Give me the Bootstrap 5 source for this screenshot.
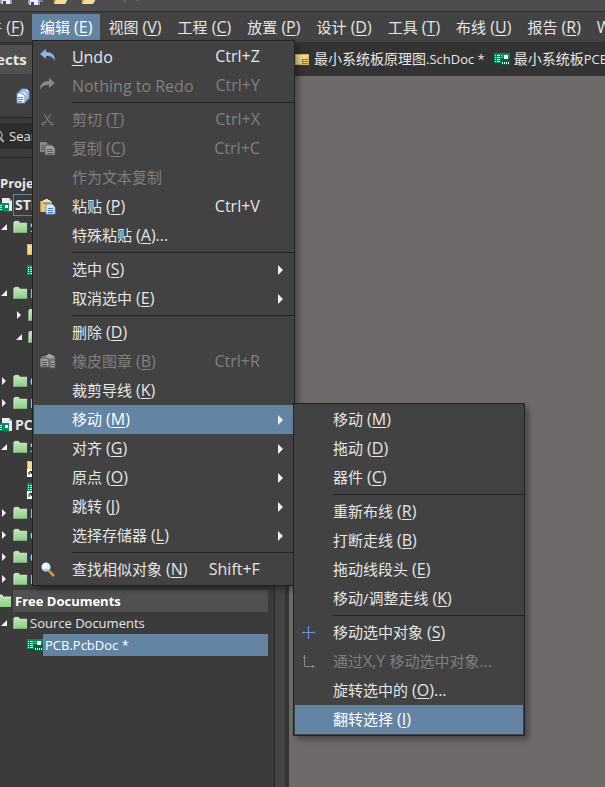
<!DOCTYPE html>
<html lang="zh-CN">
<head>
<meta charset="utf-8">
<meta name="viewport" content="width=device-width, initial-scale=1">
<title>PCB.PcbDoc</title>
<link href="https://cdn.jsdelivr.net/npm/bootstrap@5.3.0/dist/css/bootstrap.min.css" rel="stylesheet">
<style>
body{font-family:"Open Sans","Noto Sans CJK SC",sans-serif;font-size:14px;line-height:22px;color:#e6e6e6;background:#6e6a69}
svg{display:block;flex:none}
u{text-underline-offset:2px;text-decoration-thickness:1px}
i{font-style:normal;font-size:16px;line-height:1}
.quickbar{height:12px;background:#4d4d4d;border-bottom:1px solid #2d2d2d;padding-bottom:7px}
.menubar{background:#434343;height:30px;padding-top:2px;margin:0;font-size:15px;line-height:26px}
.menubar>.nav-item:first-child{margin-left:-36px}
.menubar>.nav-item:last-child{min-width:0;flex:0 1 auto;overflow:hidden}
.top-btn{border:0;background:none;color:#e6e6e6;padding:0 8px;height:26px;display:block;white-space:nowrap}
.top-btn.show{background:#6484a4;color:#fff}
.pop{--bs-dropdown-min-width:0;display:block;position:absolute;margin:0;padding:1px;border:1px solid #222;border-radius:0;background:#424242;box-shadow:4px 4px 5px rgba(0,0,0,.3);font-size:15px;color:#e6e6e6}
.pop-main{left:0;top:100%;width:263px}
.pop-sub{left:100%;top:-2px;width:232px}
.cmd{display:flex;align-items:center;gap:16px;width:100%;height:29px;border:0;background:none;color:#e6e6e6;padding:0 10px 0 6px;text-align:left;line-height:29px;white-space:nowrap}
.cmd:disabled{color:#808080}
.cmd.on{background:#6484a4;color:#fff}
.cmd kbd{font:inherit;font-size:16px;background:none;color:inherit;padding:0 23px 0 0;margin-left:auto}
.ico{width:16px;flex:none}
.tri{margin-left:auto}
.rule{height:1px;margin:2px -1px 2px 38px;background:#222}
.side{width:275px;background:#3b3b3b;border-right:1px solid #262626;font-size:13px}
.gutter{width:14px;background:#444;border-right:4px solid #333}
.side-head{height:32px;line-height:29px;border-top:3px solid #333;background:#505050;font-weight:700;font-size:15px;text-indent:-34px}
.side-tools{height:44px;background:#404040;border-bottom:1px solid #262626;padding-left:16px}
.finder{margin:5px 0 8px;height:26px;background:#2d2d2d;border-radius:0;padding:0 0 0 9px;position:relative}
.finder input{border:0;background:none;color:#e6e6e6;padding:0;width:100%}
.finder input::placeholder{color:#e6e6e6}
.finder svg{position:absolute;left:-8px;top:7px}
.tree-head{height:37px;border-top:1px solid #262626;padding-top:14px;font-weight:700}
.tree{margin:0;padding:0 6px 0 0;list-style:none}
.tree li{display:flex;align-items:center;height:22px}
.tree .cap{flex:1;height:22px;line-height:22px;padding-left:2px;white-space:nowrap;min-width:0;overflow:hidden}
.lv0 svg{margin-left:-4px;margin-right:1px}
.lv0 .cap{font-weight:700}
.lv0 .proj{font-size:14px}
.lv1 .twist{margin-right:5px}
.lv2{padding-left:15px}
.lv2 .twist{margin-right:5px}
.doc{padding-left:27px}
.tree .focus-box{border:1px solid #6484a4;line-height:20px;padding-left:1px}
.free{background:#505050;color:#fff}
.picked{background:#6484a4;color:#fff}
.tabs{height:34px;background:#333;padding-left:6px;overflow:hidden}
.tab{border:0;background:none;color:#e6e6e6;padding:0;height:34px;white-space:nowrap;display:flex;flex:none;align-items:center;gap:5px;margin-right:9px}
.tab+.tab{gap:4px}
.tab i{font-size:13px}
</style>
<script src="https://cdn.jsdelivr.net/npm/bootstrap@5.3.0/dist/js/bootstrap.bundle.min.js"></script>
</head>
<body class="d-flex flex-column vh-100 overflow-hidden">
<svg width="0" height="0" class="position-absolute">
<defs>
<linearGradient id="gg" x1="0" y1="0" x2="0" y2="1"><stop offset="0" stop-color="#c3e6bb"/><stop offset="1" stop-color="#8fcd88"/></linearGradient>
<linearGradient id="yy" x1="0" y1="0" x2="1" y2="1"><stop offset="0" stop-color="#fbe9a9"/><stop offset="1" stop-color="#e6c565"/></linearGradient>
</defs>
<symbol id="folder" viewBox="0 0 16 14"><path d="M1 2l1-1h4l1 2h8v10H1z" fill="url(#gg)"/><path d="M1 13V2l1-1h4l1 2h8" fill="none" stroke="#d4efce"/></symbol>
<symbol id="pcb" viewBox="0 0 16 12"><path d="M0 0h16v10H0z" fill="#0b8a5c"/><path d="M7 5h9v7H7z" fill="#06613f"/><path d="M10 2h4v4h-4z" fill="#f4fff9"/><path d="M1 2.500h1M3 2.500h3M1 4.500h1M3 4.500h3M1 6.500h1M3 6.500h3M1 8.500h1M3 8.500h3" stroke="#dff5ea"/><path d="M8.500 9v2M10.500 9v2M12.500 9v2M14.500 9v2" stroke="#e8fff5"/><path d="M7 2.500h2M7 4.500h2" stroke="#37c48d"/></symbol>
<symbol id="sch" viewBox="0 0 14 11"><path d="M0 0h14v11H0z" fill="url(#yy)"/><path d="M.5.5h13v10H.5z" fill="none" stroke="#d3b364"/><path d="M7 5.500h6M8 7.500h5M7 9.500h6M7.500 5v5" stroke="#8d783f"/></symbol>
<symbol id="prj" viewBox="0 0 16 16"><path d="M6 1h7l3 3v10H6z" fill="#e8edf8"/><path d="M13 1v3h3" fill="#a9b6d6"/><path d="M0 6h13v8H0z" fill="#0b8a5c"/><path d="M9 8h3v3H9z" fill="#fff"/><path d="M1 8.500h5M1 10.500h5M1 12.500h5" stroke="#dff5ea"/><path d="M8.500 12v3M10.500 12v3M12.500 12v3" stroke="#0b8a5c"/></symbol>
<symbol id="open" viewBox="0 0 6 8"><path d="M6 1v6H0z" fill="#f2f2f2"/></symbol>
<symbol id="shut" viewBox="0 0 6 8"><path d="M1 0l4 4-4 4z" fill="#f2f2f2"/></symbol>
<symbol id="more" viewBox="0 0 5 10"><path d="M0 0l5 5-5 5z" fill="#f0f0f0"/></symbol>
<symbol id="undo" viewBox="0 0 16 16"><path d="M0 5l6-5v3c6 0 9 3 9 9-2-4-4-5-9-5v3z" fill="#8fb4e6"/></symbol>
<symbol id="clip" viewBox="0 0 16 16"><path d="M0 2h12v11H0z" fill="#e6c67c"/><path d="M0 2h1v11H0zM11 2h1v3h-1z" fill="#b98d3e"/><path d="M3 1h2V0h3v1h2v3H3z" fill="#f5df97"/><path d="M3 4h7" stroke="#77602f"/><path d="M6 5h6l3 3v7H6z" fill="#dce8fb" stroke="#7995c7"/><path d="M8 9.500h5M8 11.500h5M8 13.500h5" stroke="#4f74b4"/></symbol>
<symbol id="disk" viewBox="0 0 12 12"><path d="M0 0h12v11H1l-1-1z" fill="#9797cd"/><path d="M2 6h8v5H2z" fill="#eef0fb"/><path d="M3 8h3v3H3z" fill="#404086"/></symbol>
<symbol id="yfold" viewBox="0 0 14 12"><path d="M0 3h11v9H0z" fill="#d2a74d"/><path d="M3 6h11l-3 5H0z" fill="#f3dc99"/></symbol>
<symbol id="link" viewBox="0 0 16 14"><path d="M0 6h7v8H0z" fill="#fff"/><path d="M2 12V9h3M3 8l2 1-1 2" fill="none" stroke="#111"/></symbol>
</svg>

<div class="quickbar d-flex align-items-start flex-shrink-0 overflow-hidden">
<svg width="12" height="4" viewBox="0 7 12 4"><use href="#disk" width="12" height="12"/></svg>
<svg class="ms-3" width="15" height="5" viewBox="0 6 15 5"><path d="M4 0h11v8H4z" fill="#77a"/><use href="#disk" width="12" height="12"/></svg>
<svg class="ms-2" width="18" height="4" viewBox="-3 7 18 4"><use href="#yfold" width="14" height="12"/></svg>
<svg class="ms-2" width="20" height="4" viewBox="-5 7 20 4"><use href="#yfold" width="14" height="12"/></svg>
<svg class="ms-4" width="20" height="4" viewBox="0 0 20 4"><path d="M3.500 0v2M16.500 0v1" stroke="#678cab"/></svg>
</div>

<ul class="menubar nav flex-nowrap align-items-start flex-shrink-0">
<li class="nav-item"><button class="top-btn">文件<i> (<u>F</u>)</i></button></li>
<li class="nav-item position-relative"><button class="top-btn show" aria-expanded="true">编辑<i> (<u>E</u>)</i></button>
<div class="dropdown-menu pop pop-main">
<button class="cmd"><svg class="ico" height="16"><use href="#undo"/></svg><i><u>U</u>ndo</i><kbd>Ctrl+Z</kbd></button>
<button class="cmd" disabled><svg class="ico" height="16" viewBox="0 0 16 16"><path d="M15 5L9 0v3C3 3 0 6 0 12c2-4 4-5 9-5v3z" fill="#8a8a8a"/></svg><i>Nothing to Redo</i><kbd>Ctrl+Y</kbd></button>
<div class="rule"></div>
<button class="cmd" disabled><svg class="ico" height="16" viewBox="0 0 16 16"><path d="M4 2l6 9M11 2L5 11" stroke="#858585" fill="none"/><path d="M5 10l-3 1v2h2zM10 10l3 1v2h-2z" fill="none" stroke="#777"/></svg><span>剪切<i> (<u>T</u>)</i></span><kbd>Ctrl+X</kbd></button>
<button class="cmd" disabled><svg class="ico" height="16" viewBox="0 0 16 16"><path d="M0 1h6l3 3v7H0z" fill="#8b8b8b"/><path d="M5 4h7l3 3v7H5z" fill="#a0a0a0" stroke="#555"/><path d="M7 8.500h6M7 10.500h6M7 12.500h6M1 4.500h3M1 6.500h3M1 8.500h3" stroke="#5c5c5c"/></svg><span>复制<i> (<u>C</u>)</i></span><kbd>Ctrl+C</kbd></button>
<button class="cmd" disabled><span class="ico"></span><span>作为文本复制</span></button>
<button class="cmd"><svg class="ico" height="16"><use href="#clip"/></svg><span>粘贴<i> (<u>P</u>)</i></span><kbd>Ctrl+V</kbd></button>
<button class="cmd"><span class="ico"></span><span>特殊粘贴<i> (<u>A</u>)...</i></span></button>
<div class="rule"></div>
<button class="cmd"><span class="ico"></span><span>选中<i> (<u>S</u>)</i></span><svg class="tri" width="5" height="10"><use href="#more"/></svg></button>
<button class="cmd"><span class="ico"></span><span>取消选中<i> (<u>E</u>)</i></span><svg class="tri" width="5" height="10"><use href="#more"/></svg></button>
<div class="rule"></div>
<button class="cmd"><span class="ico"></span><span>删除<i> (<u>D</u>)</i></span></button>
<button class="cmd" disabled><svg class="ico" height="16" viewBox="0 0 16 16"><path d="M2 2h13v11H2z" fill="#858585"/><path d="M6 1h2V0h3v1h2v3H6z" fill="#a5a5a5"/><path d="M0 4h7l2 2v7H0z" fill="#9a9a9a" stroke="#5b5b5b"/><path d="M2 7.500h5M2 9.500h5M2 11.500h5" stroke="#5b5b5b"/><path d="M10 6h5v8h-5z" fill="#9d9d9d" stroke="#5b5b5b"/><path d="M11 9.500h3M11 11.500h3" stroke="#555"/></svg><span>橡皮图章<i> (<u>B</u>)</i></span><kbd>Ctrl+R</kbd></button>
<button class="cmd"><span class="ico"></span><span>裁剪导线<i> (<u>K</u>)</i></span></button>
<div class="position-relative">
<button class="cmd on" aria-expanded="true"><span class="ico"></span><span>移动<i> (<u>M</u>)</i></span><svg class="tri" width="5" height="10"><use href="#more"/></svg></button>
<div class="dropdown-menu pop pop-sub">
<button class="cmd"><span class="ico"></span><span>移动<i> (<u>M</u>)</i></span></button>
<button class="cmd"><span class="ico"></span><span>拖动<i> (<u>D</u>)</i></span></button>
<button class="cmd"><span class="ico"></span><span>器件<i> (<u>C</u>)</i></span></button>
<div class="rule"></div>
<button class="cmd"><span class="ico"></span><span>重新布线<i> (<u>R</u>)</i></span></button>
<button class="cmd"><span class="ico"></span><span>打断走线<i> (<u>B</u>)</i></span></button>
<button class="cmd"><span class="ico"></span><span>拖动线段头<i> (<u>E</u>)</i></span></button>
<button class="cmd"><span class="ico"></span><span>移动/调整走线<i> (<u>K</u>)</i></span></button>
<div class="rule"></div>
<button class="cmd"><svg class="ico" height="16" viewBox="0 0 16 16"><path d="M1 7.500h13M7.500 1v13" stroke="#7293dc"/><path d="M2.500 6v3M12.500 6v3M6 2.500h3M6 12.500h3" stroke="#5c76b0" stroke-opacity=".6"/></svg><span>移动选中对象<i> (<u>S</u>)</i></span></button>
<button class="cmd" disabled><svg class="ico" height="16" viewBox="0 0 16 16"><path d="M3.500 1v11.500H14M2 3.500h3M11.500 11v3" stroke="#858585" fill="none"/></svg><span>通过<i>X,Y </i>移动选中对象<i>...</i></span></button>
<button class="cmd"><span class="ico"></span><span>旋转选中的<i> (<u>O</u>)...</i></span></button>
<button class="cmd on"><span class="ico"></span><span>翻转选择<i> (<u>I</u>)</i></span></button>
</div>
</div>
<button class="cmd"><span class="ico"></span><span>对齐<i> (<u>G</u>)</i></span><svg class="tri" width="5" height="10"><use href="#more"/></svg></button>
<button class="cmd"><span class="ico"></span><span>原点<i> (<u>O</u>)</i></span><svg class="tri" width="5" height="10"><use href="#more"/></svg></button>
<button class="cmd"><span class="ico"></span><span>跳转<i> (<u>J</u>)</i></span><svg class="tri" width="5" height="10"><use href="#more"/></svg></button>
<button class="cmd"><span class="ico"></span><span>选择存储器<i> (<u>L</u>)</i></span><svg class="tri" width="5" height="10"><use href="#more"/></svg></button>
<div class="rule"></div>
<button class="cmd"><svg class="ico" height="16" viewBox="0 0 16 16"><path d="M9 9l5 5" stroke="#d99a3e" stroke-width="2.500"/><circle cx="6" cy="5" r="4.500" fill="#dcebfd"/><path d="M2 7a4.500 4.500 0 0 0 8 0" fill="#a9c8f0"/><circle cx="5" cy="4" r="2" fill="#fff"/></svg><span>查找相似对象<i> (<u>N</u>)</i></span><kbd>Shift+F</kbd></button>
</div>
</li>
<li class="nav-item"><button class="top-btn">视图<i> (<u>V</u>)</i></button></li>
<li class="nav-item"><button class="top-btn">工程<i> (<u>C</u>)</i></button></li>
<li class="nav-item"><button class="top-btn">放置<i> (<u>P</u>)</i></button></li>
<li class="nav-item"><button class="top-btn">设计<i> (<u>D</u>)</i></button></li>
<li class="nav-item"><button class="top-btn">工具<i> (<u>T</u>)</i></button></li>
<li class="nav-item"><button class="top-btn">布线<i> (<u>U</u>)</i></button></li>
<li class="nav-item"><button class="top-btn">报告<i> (<u>R</u>)</i></button></li>
<li class="nav-item"><button class="top-btn"><i>Window (<u>W</u>)</i></button></li>
</ul>

<div class="d-flex flex-grow-1">
<aside class="side flex-shrink-0 overflow-hidden">
<div class="side-head">Projects</div>
<div class="side-tools d-flex align-items-center"><svg width="14" height="16" viewBox="0 0 14 16"><path d="M5 1h6l2 2v8H5z" fill="#cfe0f8" stroke="#5f8cc4"/><path d="M3 3h6l2 2v8H3z" fill="#dce9fb" stroke="#5f8cc4"/><path d="M1 5h5l3 3v7H1z" fill="#f3f8ff" stroke="#5f8cc4"/><path d="M2 9.500h5M2 11.500h5M2 13.500h4" stroke="#5f8cc4"/></svg></div>
<div class="finder d-flex"><svg width="12" height="13" viewBox="0 0 12 13"><circle cx="6" cy="5" r="4" fill="none" stroke="#aaa" stroke-width="1.500"/><path d="M8 8l4 4" stroke="#aaa" stroke-width="2"/></svg><input type="text" aria-label="Search" placeholder="Search"></div>
<div class="tree-head">Project</div>
<ul class="tree">
<li class="lv0"><svg width="16" height="16"><use href="#prj"/></svg><span class="cap proj focus-box">STM32.PrjPcb *</span></li>
<li class="lv1"><svg class="twist" width="8" height="8"><use href="#open"/></svg><svg width="15" height="14"><use href="#folder"/></svg><span class="cap">Source Documents</span></li>
<li class="doc"><svg width="14" height="11"><use href="#sch"/></svg><span class="cap ps-1">最小系统板原理图.SchDoc</span></li>
<li class="doc"><svg width="16" height="12"><use href="#pcb"/></svg><span class="cap">最小系统板PCB.PcbDoc</span></li>
<li class="lv1"><svg class="twist" width="8" height="8"><use href="#open"/></svg><svg width="15" height="14"><use href="#folder"/></svg><span class="cap">Libraries</span></li>
<li class="lv2"><svg class="twist" width="8" height="8"><use href="#shut"/></svg><svg width="15" height="14"><use href="#folder"/></svg><span class="cap">PCB Library</span></li>
<li class="lv2"><svg class="twist" width="8" height="8"><use href="#open"/></svg><svg width="15" height="14"><use href="#folder"/></svg><span class="cap">Schematic Library</span></li>
<li></li>
<li class="lv1"><svg class="twist" width="8" height="8"><use href="#shut"/></svg><svg width="15" height="14"><use href="#folder"/></svg><span class="cap">Components</span></li>
<li class="lv1"><svg class="twist" width="8" height="8"><use href="#shut"/></svg><svg width="15" height="14"><use href="#folder"/></svg><span class="cap">Nets</span></li>
<li class="lv0"><svg width="16" height="16"><use href="#prj"/></svg><span class="cap proj">PCB.PrjPcb</span></li>
<li class="lv1"><svg class="twist" width="8" height="8"><use href="#open"/></svg><svg width="15" height="14"><use href="#folder"/></svg><span class="cap">Source Documents</span></li>
<li class="doc"><svg width="16" height="16"><svg width="14" height="11"><use href="#sch"/></svg><svg y="2" width="16" height="14"><use href="#link"/></svg></svg><span class="cap">Sheet.SchDoc</span></li>
<li class="doc"><svg width="16" height="16"><svg width="16" height="12"><use href="#pcb"/></svg><svg y="2" width="16" height="14"><use href="#link"/></svg></svg><span class="cap">PCB.PcbDoc</span></li>
<li class="lv1"><svg class="twist" width="8" height="8"><use href="#shut"/></svg><svg width="15" height="14"><use href="#folder"/></svg><span class="cap">Libraries</span></li>
<li class="lv1"><svg class="twist" width="8" height="8"><use href="#shut"/></svg><svg width="15" height="14"><use href="#folder"/></svg><span class="cap">Generated</span></li>
<li class="lv1"><svg class="twist" width="8" height="8"><use href="#shut"/></svg><svg width="15" height="14"><use href="#folder"/></svg><span class="cap">Components</span></li>
<li class="lv1"><svg class="twist" width="8" height="8"><use href="#shut"/></svg><svg width="15" height="14"><use href="#folder"/></svg><span class="cap">Nets</span></li>
<li class="lv0"><svg width="16" height="14"><use href="#folder"/></svg><span class="cap free">Free Documents</span></li>
<li class="lv1"><svg class="twist" width="8" height="8"><use href="#open"/></svg><svg width="15" height="14"><use href="#folder"/></svg><span class="cap">Source Documents</span></li>
<li class="doc"><svg width="16" height="12"><use href="#pcb"/></svg><span class="cap picked">PCB.PcbDoc *</span></li>
</ul>
</aside>
<div class="gutter flex-shrink-0"></div>
<main class="flex-fill overflow-hidden">
<div class="tabs d-flex">
<button class="tab"><svg width="14" height="11"><use href="#sch"/></svg><span>最小系统板原理图<i>.SchDoc *</i></span></button>
<button class="tab"><svg width="16" height="12"><use href="#pcb"/></svg><span>最小系统板<i>PCB.PcbDoc</i></span></button>
</div>
</main>
</div>
</body>
</html>
